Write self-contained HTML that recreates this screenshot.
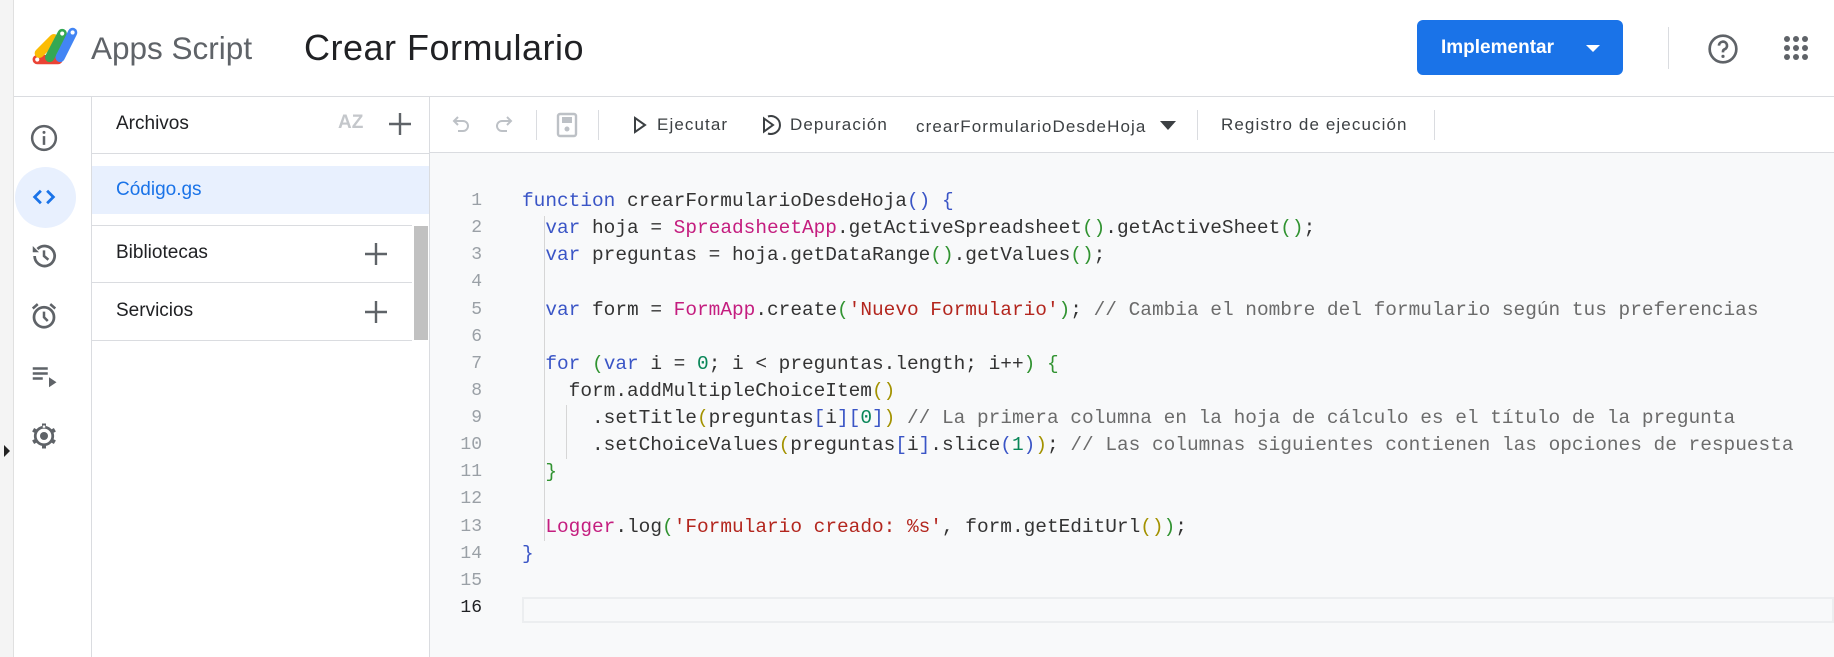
<!DOCTYPE html>
<html><head><meta charset="utf-8"><style>
*{margin:0;padding:0;box-sizing:border-box}
body{width:1834px;height:657px;overflow:hidden;background:#fff;font-family:"Liberation Sans",sans-serif;position:relative;color:#3c4043}
.a{position:absolute}
.hl{position:absolute;background:#dadce0}
.code{position:absolute;left:522px;top:188px;font-family:"Liberation Mono",monospace;font-size:19.45px;line-height:27.13px;color:#333;white-space:pre}
.ln{position:absolute;left:440px;width:42px;top:188px;font-family:"Liberation Mono",monospace;font-size:18px;line-height:27.13px;color:#9aa0a6;text-align:right;white-space:pre}
.k{color:#3a55c6}.p{color:#c41d7f}.s{color:#b3261e}.c{color:#6b6b6b}.n{color:#098658}.g{color:#a39200}.b{color:#3a55c6}.gr{color:#319331}
.tb{position:absolute;top:115px;font-size:17px;letter-spacing:1.1px;color:#3c4043}
</style></head><body>
<div class="a" style="left:0;top:0;width:14px;height:657px;background:#f4f4f4;border-right:1px solid #e0e0e0"></div>
<div class="a" style="left:4px;top:445px;width:0;height:0;border-top:6px solid transparent;border-bottom:6px solid transparent;border-left:6px solid #222"></div>
<!-- header -->
<div class="hl" style="left:14px;top:96px;width:1820px;height:1px"></div>
<svg class="a" style="left:31px;top:24px" width="52" height="44" viewBox="0 0 50 40">
<g stroke-linecap="round" stroke-width="9" fill="none">
<line x1="6" y1="33" x2="26" y2="33" stroke="#ea4335"/>
<line x1="8" y1="27" x2="22" y2="13" stroke="#fbbc04"/>
<line x1="18" y1="31" x2="30" y2="8" stroke="#34a853"/>
<line x1="28" y1="31" x2="40" y2="7" stroke="#4285f4"/>
</g><circle cx="40" cy="7" r="2" fill="#fff"/><circle cx="30" cy="8" r="2" fill="#fff"/><circle cx="6" cy="33" r="2" fill="#fff"/></svg>
<div class="a" style="left:91px;top:30px;font-size:31.5px;color:#5f6368">Apps Script</div>
<div class="a" style="left:304px;top:27px;font-size:36px;letter-spacing:0.5px;color:#202124">Crear Formulario</div>
<div class="a" style="left:1417px;top:20px;width:206px;height:55px;background:#1a73e8;border-radius:6px;color:#fff;font-size:19px;font-weight:bold;padding:17px 0 0 24px">Implementar</div>
<div class="a" style="left:1586px;top:45px;border-left:7px solid transparent;border-right:7px solid transparent;border-top:7px solid #fff"></div>
<div class="hl" style="left:1668px;top:27px;width:1px;height:42px"></div>
<svg class="a" style="left:1707px;top:33px" width="32" height="32" viewBox="0 0 24 24"><circle cx="12" cy="12" r="10" fill="none" stroke="#5f6368" stroke-width="2"/><path d="M9 9.5a3 3 0 1 1 4 2.8c-.7.3-1 .9-1 1.7v.5" fill="none" stroke="#5f6368" stroke-width="2"/><circle cx="12" cy="17.5" r="1.2" fill="#5f6368"/></svg>
<svg class="a" style="left:1783px;top:35px" width="26" height="26" viewBox="0 0 26 26" fill="#5f6368"><circle cx="4" cy="4" r="3"/><circle cx="13" cy="4" r="3"/><circle cx="22" cy="4" r="3"/><circle cx="4" cy="13" r="3"/><circle cx="13" cy="13" r="3"/><circle cx="22" cy="13" r="3"/><circle cx="4" cy="22" r="3"/><circle cx="13" cy="22" r="3"/><circle cx="22" cy="22" r="3"/></svg>
<!-- rail -->
<div class="hl" style="left:91px;top:97px;width:1px;height:560px"></div>
<div class="a" style="left:15px;top:167px;width:61px;height:61px;border-radius:50%;background:#e8f0fe"></div>
<svg class="a" style="left:29px;top:123px" width="30" height="30" viewBox="0 0 24 24"><circle cx="12" cy="12" r="9.5" fill="none" stroke="#5f6368" stroke-width="2"/><rect x="11" y="10.5" width="2" height="7" fill="#5f6368"/><circle cx="12" cy="7.5" r="1.2" fill="#5f6368"/></svg>
<svg class="a" style="left:29px;top:182px" width="30" height="30" viewBox="0 0 24 24"><path d="M9.5 7l-5 5 5 5M14.5 7l5 5-5 5" fill="none" stroke="#1a73e8" stroke-width="2.2"/></svg>
<svg class="a" style="left:29px;top:241px" width="30" height="30" viewBox="0 0 24 24"><path d="M4.5 12a8 8 0 1 0 2.3-5.6" fill="none" stroke="#5f6368" stroke-width="2.2"/><path d="M3 4v5h5z" fill="#5f6368"/><path d="M12 7.5V12l3.5 3" fill="none" stroke="#5f6368" stroke-width="2"/></svg>
<svg class="a" style="left:29px;top:301px" width="30" height="30" viewBox="0 0 24 24"><circle cx="12" cy="13" r="8" fill="none" stroke="#5f6368" stroke-width="2.2"/><path d="M12 8.5V13l3 3M3 6l4-3.5M21 6l-4-3.5" fill="none" stroke="#5f6368" stroke-width="2"/></svg>
<svg class="a" style="left:29px;top:361px" width="30" height="30" viewBox="0 0 24 24"><path d="M3 6h12M3 10h12M3 14h8" stroke="#5f6368" stroke-width="2"/><path d="M16 13v8l6-4z" fill="#5f6368"/></svg>
<svg class="a" style="left:29px;top:421px" width="30" height="30" viewBox="0 0 24 24"><g stroke="#5f6368" stroke-width="3.2" stroke-linecap="butt"><line x1="12" y1="2" x2="12" y2="22"/><line x1="3.3" y1="7" x2="20.7" y2="17"/><line x1="3.3" y1="17" x2="20.7" y2="7"/></g><circle cx="12" cy="12" r="7" fill="#fff" stroke="#5f6368" stroke-width="2.2"/><circle cx="12" cy="12" r="3.2" fill="#5f6368"/><g fill="#fff"><rect x="11" y="3.6" width="2" height="1.8"/></g></svg>
<!-- files panel -->
<div class="hl" style="left:429px;top:97px;width:1px;height:560px"></div>
<div class="a" style="left:116px;top:113px;font-size:19px;color:#202124">Archivos</div>
<div class="a" style="left:338px;top:112px;font-size:19px;font-weight:bold;color:#c4c7cb">AZ</div>
<svg class="a" style="left:388px;top:112px" width="24" height="24" viewBox="0 0 24 24"><path d="M12 1v22M1 12h22" stroke="#5f6368" stroke-width="2.4"/></svg>
<div class="hl" style="left:92px;top:153px;width:337px;height:1px"></div>
<div class="a" style="left:92px;top:166px;width:337px;height:48px;background:#e8f0fe"></div>
<div class="a" style="left:116px;top:179px;font-size:19px;color:#1a73e8">Código.gs</div>
<div class="hl" style="left:92px;top:225px;width:320px;height:1px"></div>
<div class="a" style="left:116px;top:242px;font-size:19px;color:#202124">Bibliotecas</div>
<svg class="a" style="left:364px;top:242px" width="24" height="24" viewBox="0 0 24 24"><path d="M12 1v22M1 12h22" stroke="#5f6368" stroke-width="2.4"/></svg>
<div class="hl" style="left:92px;top:282px;width:320px;height:1px"></div>
<div class="a" style="left:116px;top:300px;font-size:19px;color:#202124">Servicios</div>
<svg class="a" style="left:364px;top:300px" width="24" height="24" viewBox="0 0 24 24"><path d="M12 1v22M1 12h22" stroke="#5f6368" stroke-width="2.4"/></svg>
<div class="hl" style="left:92px;top:340px;width:320px;height:1px"></div>
<div class="a" style="left:414px;top:226px;width:14px;height:114px;background:#c1c1c1"></div>
<!-- toolbar -->
<svg class="a" style="left:450px;top:112px" width="24" height="24" viewBox="0 0 24 24"><path d="M8 5L4 9l4 4M4 9h9a5 5 0 0 1 0 10H8" fill="none" stroke="#bdc1c6" stroke-width="2"/></svg>
<svg class="a" style="left:491px;top:112px" width="24" height="24" viewBox="0 0 24 24"><path d="M16 5l4 4-4 4M20 9h-9a5 5 0 0 0 0 10h5" fill="none" stroke="#bdc1c6" stroke-width="2"/></svg>
<div class="hl" style="left:536px;top:110px;width:1px;height:30px"></div>
<svg class="a" style="left:555px;top:112px" width="24" height="26" viewBox="0 0 24 26"><rect x="3" y="2" width="18" height="22" rx="2" fill="none" stroke="#bdc1c6" stroke-width="2.4"/><rect x="7" y="5" width="10" height="6" fill="#bdc1c6"/><circle cx="12" cy="17" r="2.5" fill="#bdc1c6"/></svg>
<div class="hl" style="left:598px;top:110px;width:1px;height:30px"></div>
<svg class="a" style="left:633px;top:116px" width="14" height="18" viewBox="0 0 14 18"><path d="M2 2l10 7-10 7z" fill="none" stroke="#3c4043" stroke-width="2"/></svg>
<div class="tb" style="left:657px">Ejecutar</div>
<svg class="a" style="left:758px;top:113px" width="24" height="24" viewBox="0 0 24 24"><path d="M6 5.5l9 6.5-9 6.5z" fill="none" stroke="#3c4043" stroke-width="2"/><path d="M10 3.5a9 9 0 1 1 0 17" fill="none" stroke="#3c4043" stroke-width="2"/></svg>
<div class="tb" style="left:790px">Depuración</div>
<div class="tb" style="left:916px;top:117px">crearFormularioDesdeHoja</div>
<div class="a" style="left:1160px;top:121px;border-left:8px solid transparent;border-right:8px solid transparent;border-top:9px solid #3c4043"></div>
<div class="hl" style="left:1197px;top:110px;width:1px;height:30px"></div>
<div class="tb" style="left:1221px">Registro de ejecución</div>
<div class="hl" style="left:1434px;top:110px;width:1px;height:30px"></div>
<div class="hl" style="left:430px;top:152px;width:1404px;height:1px"></div>
<!-- code -->
<div class="a" style="left:430px;top:153px;width:1404px;height:504px;background:#f8f9fa"></div>
<div class="a" style="left:522px;top:597px;width:1312px;height:26px;border:2px solid #eceef0"></div>
<div class="a" style="left:544px;top:216px;width:1px;height:325px;background:#d6d6d6"></div>
<div class="a" style="left:566px;top:405px;width:1px;height:54px;background:#d6d6d6"></div>
<div class="ln">1
2
3
4
5
6
7
8
9
10
11
12
13
14
15
<span style="color:#202124">16</span></div>
<div class="code"><span class="k">function</span> crearFormularioDesdeHoja<span class="b">()</span> <span class="b">{</span>
  <span class="k">var</span> hoja = <span class="p">SpreadsheetApp</span>.getActiveSpreadsheet<span class="gr">()</span>.getActiveSheet<span class="gr">()</span>;
  <span class="k">var</span> preguntas = hoja.getDataRange<span class="gr">()</span>.getValues<span class="gr">()</span>;

  <span class="k">var</span> form = <span class="p">FormApp</span>.create<span class="gr">(</span><span class="s">'Nuevo Formulario'</span><span class="gr">)</span>; <span class="c">// Cambia el nombre del formulario según tus preferencias</span>

  <span class="k">for</span> <span class="gr">(</span><span class="k">var</span> i = <span class="n">0</span>; i &lt; preguntas.length; i++<span class="gr">)</span> <span class="gr">{</span>
    form.addMultipleChoiceItem<span class="g">()</span>
      .setTitle<span class="g">(</span>preguntas<span class="b">[</span>i<span class="b">][</span><span class="n">0</span><span class="b">]</span><span class="g">)</span> <span class="c">// La primera columna en la hoja de cálculo es el título de la pregunta</span>
      .setChoiceValues<span class="g">(</span>preguntas<span class="b">[</span>i<span class="b">]</span>.slice<span class="b">(</span><span class="n">1</span><span class="b">)</span><span class="g">)</span>; <span class="c">// Las columnas siguientes contienen las opciones de respuesta</span>
  <span class="gr">}</span>

  <span class="p">Logger</span>.log<span class="gr">(</span><span class="s">'Formulario creado: %s'</span>, form.getEditUrl<span class="g">()</span><span class="gr">)</span>;
<span class="b">}</span>
</div>
</body></html>
